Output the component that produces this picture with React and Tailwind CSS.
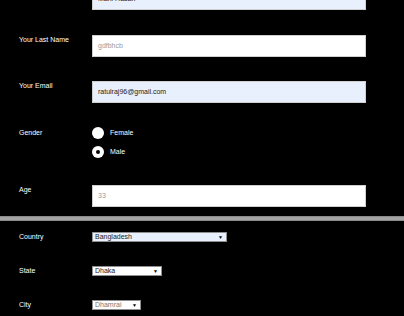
const TextRow = ({ label, value, filled, placeholder, className = "" }) => (
  <div className={`flex ${className}`}>
    <div className="w-[73px] shrink-0 mt-[1px] leading-[8px] text-white">{label}</div>
    <div
      className={`w-[274px] h-[22px] flex items-center px-[5px] border border-[#cfcfcf] ${
        filled ? "bg-[#e8f0fe] text-[#222]" : "bg-white text-[#9a9a9a]"
      }`}
    >
      {value || placeholder}
    </div>
  </div>
)

const SelectRow = ({ label, value, width, filled, muted, className = "" }) => (
  <div className={`flex items-center ${className}`}>
    <div className="w-[73px] shrink-0 leading-[8px] text-white">{label}</div>
    <div
      className={`h-[10px] flex items-center justify-between pl-[2px] pr-[3px] border border-[#8f8f8f] leading-[8px] ${
        filled ? "bg-[#e8f0fe]" : "bg-white"
      } ${muted ? "text-[#777]" : "text-[#222]"}`}
      style={{ width }}
    >
      <span>{value}</span>
      <span className="text-black text-[5px] leading-[5px]">▼</span>
    </div>
  </div>
)

const Radio = ({ label, checked, className = "" }) => (
  <div className={`flex items-center ${className}`}>
    <div className="w-[12px] h-[12px] rounded-full bg-white flex items-center justify-center">
      {checked && <div className="w-[4px] h-[4px] rounded-full bg-black" />}
    </div>
    <span className="ml-[6px] leading-[8px] text-white">{label}</span>
  </div>
)

export default function App() {
  return (
    <div className="min-h-screen h-[316px] overflow-hidden bg-black text-[7px] font-['Liberation_Sans',Arial,sans-serif]">
      <div className="pl-[19px]">
        {/* first row sits mostly above the visible area; only its input shows */}
        <TextRow label="" value="Mahi Hasan" filled className="-mt-[12px]" />
        <TextRow label="Your Last Name" placeholder="gdfbhcb" className="mt-[25px]" />
        <TextRow label="Your Email" value="ratulraj96@gmail.com" filled className="mt-[24px]" />

        <div className="flex mt-[24px]">
          <div className="w-[73px] shrink-0 mt-[2px] leading-[8px] text-white">Gender</div>
          <div className="flex flex-col">
            <Radio label="Female" />
            <Radio label="Male" checked className="mt-[7px]" />
          </div>
        </div>

        <TextRow label="Age" placeholder="33" className="mt-[27px]" />
      </div>

      <div className="mt-[9px] h-[5px] bg-[#a3a3a3] border-y border-[#8a8a8a]" />

      <div className="pl-[19px]">
        <SelectRow label="Country" value="Bangladesh" width={135} filled className="mt-[11px]" />
        <SelectRow label="State" value="Dhaka" width={70} className="mt-[24px]" />
        <SelectRow label="City" value="Dhamrai" width={49} muted className="mt-[24px]" />
      </div>
    </div>
  )
}
